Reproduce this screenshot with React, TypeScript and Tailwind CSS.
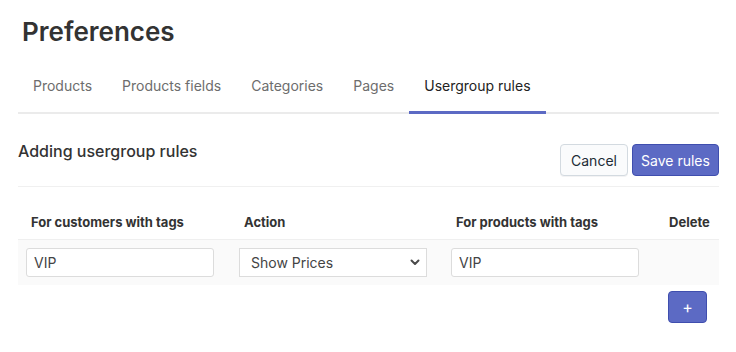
import React, { useState } from 'react';

const tabs = ['Products', 'Products fields', 'Categories', 'Pages', 'Usergroup rules'];

interface Rule {
  customerTags: string;
  action: string;
  productTags: string;
}

const App: React.FC = () => {
  const [active, setActive] = useState('Usergroup rules');
  const [rules, setRules] = useState<Rule[]>([
    { customerTags: 'VIP', action: 'Show Prices', productTags: 'VIP' },
  ]);

  const updateRule = (i: number, field: keyof Rule, value: string) => {
    setRules(rules.map((r, idx) => (idx === i ? { ...r, [field]: value } : r)));
  };

  return (
    <div className="w-[736px] h-[352px] bg-white pl-[18px] pr-[17px] font-['Inter',sans-serif] text-[#333]">
      {/* Page title */}
      <h1 className="pt-[14px] pl-[4px] text-[26px] leading-[36px] font-semibold text-[#333]">Preferences</h1>

      {/* Tabs */}
      <div className="mt-[26px] flex border-b-2 border-[#ebebeb]">
        {tabs.map((t) => (
          <button
            key={t}
            onClick={() => setActive(t)}
            className={`relative px-[15px] pb-[16px] text-[14px] leading-[20px] ${
              active === t ? 'text-[#222]' : 'text-[#6d6d6d]'
            }`}
          >
            {t}
            {active === t && (
              <span className="absolute left-0 right-0 -bottom-[2px] h-[3px] bg-[#5c6ac4]" />
            )}
          </button>
        ))}
      </div>

      {/* Section header */}
      <div className="mt-[25px] flex items-start justify-between border-b border-[#f0f0f0] pb-[10px]">
        <h2 className="text-[16px] leading-[24px] font-medium text-[#333]">Adding usergroup rules</h2>
        <div className="mt-[5px] flex gap-[4px]">
          <button className="w-[68px] h-[32px] rounded-[4px] border border-[#d3dae0] bg-[#fafbfc] text-[14px] text-[#212b36] shadow-[0_1px_0_rgba(22,29,37,0.05)]">
            Cancel
          </button>
          <button className="w-[87px] h-[32px] rounded-[4px] border border-[#3f4eae] bg-[#5c6ac4] text-[14px] text-white">
            Save rules
          </button>
        </div>
      </div>

      {/* Rules table */}
      <table className="w-full border-collapse">
        <thead>
          <tr className="text-left text-[13px] leading-[20px] font-bold text-[#333]">
            <th className="w-[213px] pl-[13px] pt-[25px] pb-[7px] font-bold">For customers with tags</th>
            <th className="w-[212px] pl-[13px] pt-[25px] pb-[7px] font-bold">Action</th>
            <th className="w-[213px] pl-[13px] pt-[25px] pb-[7px] font-bold">For products with tags</th>
            <th className="pl-[13px] pt-[25px] pb-[7px] font-bold">Delete</th>
          </tr>
        </thead>
        <tbody>
          {rules.map((r, i) => (
            <tr key={i} className="border-t border-[#efefef] bg-[#fafafa]">
              <td className="pl-[8px] pt-[8px] pb-[8px]">
                <input
                  value={r.customerTags}
                  onChange={(e) => updateRule(i, 'customerTags', e.target.value)}
                  className="block w-[188px] h-[29px] rounded-[3px] border border-[#dcdcdc] bg-white px-[7px] text-[14px] text-[#444] outline-none"
                />
              </td>
              <td className="pl-[8px] pt-[8px] pb-[8px]">
                <div className="relative w-[188px]">
                  <select
                    value={r.action}
                    onChange={(e) => updateRule(i, 'action', e.target.value)}
                    className="block w-full h-[29px] appearance-none rounded-none border border-[#dcdcdc] bg-white pl-[11px] pr-[24px] text-[14px] text-[#444] outline-none"
                  >
                    <option>Show Prices</option>
                    <option>Hide Prices</option>
                  </select>
                  <svg
                    className="pointer-events-none absolute right-[7px] top-[11px]"
                    width="10"
                    height="7"
                    viewBox="0 0 10 7"
                    fill="none"
                  >
                    <path d="M1.5 1.5L5 5L8.5 1.5" stroke="#4a4a4a" strokeWidth="2" strokeLinecap="round" strokeLinejoin="round" />
                  </svg>
                </div>
              </td>
              <td className="pl-[8px] pt-[8px] pb-[8px]">
                <input
                  value={r.productTags}
                  onChange={(e) => updateRule(i, 'productTags', e.target.value)}
                  className="block w-[188px] h-[29px] rounded-[3px] border border-[#dcdcdc] bg-white px-[7px] text-[14px] text-[#444] outline-none"
                />
              </td>
              <td />
            </tr>
          ))}
        </tbody>
      </table>

      <div className="mt-[6px] flex justify-end pr-[12px]">
        <button
          onClick={() => setRules([...rules, { customerTags: '', action: 'Show Prices', productTags: '' }])}
          className="w-[39px] h-[32px] rounded-[4px] border border-[#3f4eae] bg-[#5c6ac4] text-[16px] leading-none text-white"
        >
          +
        </button>
      </div>
    </div>
  );
};

export default App;
